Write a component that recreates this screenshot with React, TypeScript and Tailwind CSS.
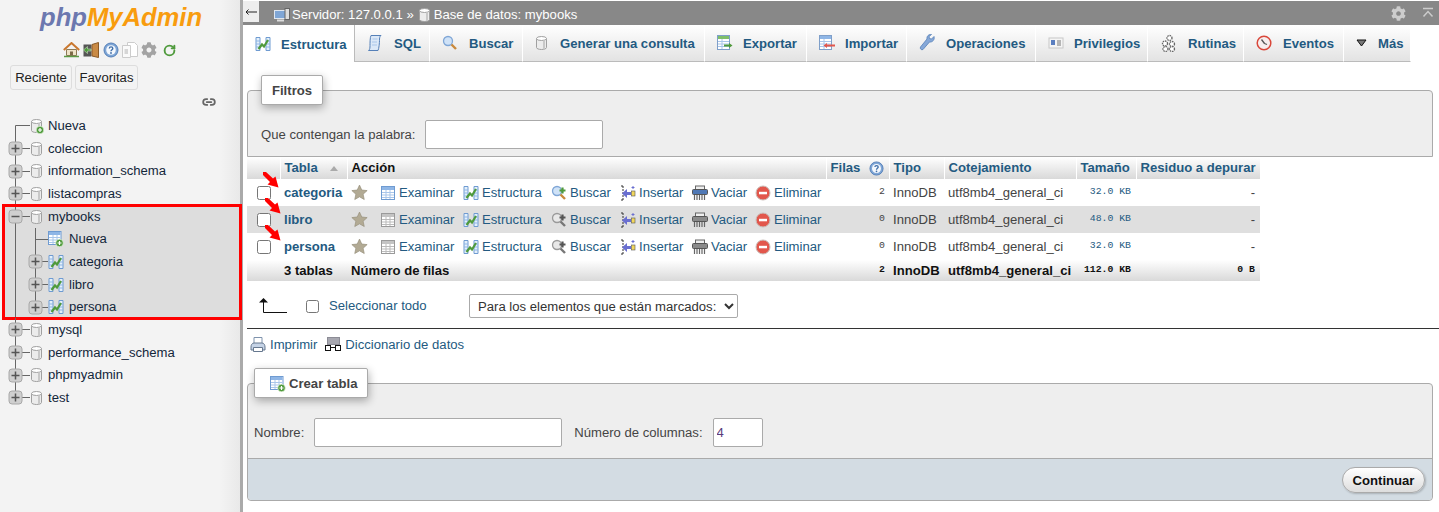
import { FaCog } from 'react-icons/fa'
import { Link2, RotateCw } from 'lucide-react'

const TableIcon = ({ gray = false }: { gray?: boolean }) => {
  const edge = gray ? '#9a9a9a' : '#6f9bd1'
  const head = gray ? '#c4c4c4' : '#8fb6e6'
  return (
    <svg width="16" height="16" viewBox="0 0 16 16" className="shrink-0">
      <rect x="1.5" y="1.5" width="13" height="13" fill="#fff" stroke={edge} />
      <rect x="2" y="2" width="12" height="3" fill={head} />
      <path d="M2 7.5h12M2 10h12M2 12.5h12M6 5v9M10 5v9" stroke={gray ? '#bbb' : '#a9c6ea'} />
    </svg>
  )
}

const PlusBadge = ({ x = 10.5, y = 11.5 }: { x?: number; y?: number }) => (
  <g>
    <circle cx={x} cy={y} r="3.8" fill="#4f9a3c" stroke="#e8f5e0" strokeWidth="0.7" />
    <path d={`M${x - 2} ${y}h4M${x} ${y - 2}v4`} stroke="#fff" strokeWidth="1.2" />
  </g>
)

const NewTableIcon = () => (
  <svg width="16" height="16" viewBox="0 0 16 16" className="shrink-0">
    <rect x="0.5" y="0.5" width="12.5" height="13" fill="#fff" stroke="#6f9bd1" />
    <rect x="1" y="1" width="11.5" height="3" fill="#8fb6e6" />
    <path d="M1 6.5h11M1 9h11M1 11.5h11M5 4v9M9 4v9" stroke="#a9c6ea" />
    <PlusBadge x={11.5} y={12} />
  </svg>
)

const DbIcon = ({ plus = false }: { plus?: boolean }) => (
  <svg width="14" height="16" viewBox="0 0 14 16" className="shrink-0">
    <path d="M1.5 3.5v9c0 1.2 2.4 2 5 2s5-.8 5-2v-9z" fill="#ececec" stroke="#a0a0a0" />
    <ellipse cx="6.5" cy="3.5" rx="5" ry="2" fill="#fff" stroke="#a0a0a0" />
    <path d="M9 5.5v8.5" stroke="#c8c8c8" strokeWidth="2" />
    {plus && <PlusBadge x={10} y={12} />}
  </svg>
)

const StructureIcon = () => (
  <svg width="16" height="16" viewBox="0 0 16 16" className="shrink-0">
    <path d="M1 1.5h4v13H1zM11 1.5h4v13h-4z" fill="#e4f0fb" stroke="#6f9bd1" />
    <path d="M1 5h4M1 8h4M1 11h4M11 5h4M11 8h4M11 11h4" stroke="#8fb6e6" />
    <path d="M3.5 13 7 8.5 9 10.5 13 4" fill="none" stroke="#4f9a3c" strokeWidth="2.2" />
  </svg>
)

const SearchIcon = ({ gray = false, plus = false }: { gray?: boolean; plus?: boolean }) => (
  <svg width="16" height="16" viewBox="0 0 16 16" className="shrink-0">
    <circle cx="6" cy="6" r="4.5" fill={gray ? '#e8e8e8' : '#cfe2f7'} stroke={gray ? '#9a9a9a' : '#7fa6d6'} strokeWidth="1.3" />
    <path d="m9.5 9.5 4.5 4.5" stroke={gray ? '#777' : '#c98a3c'} strokeWidth="2.4" />
    {plus && <path d="M11.5 2.5v6M8.5 5.5h6" stroke={gray ? '#555' : '#4f9a3c'} strokeWidth="2.2" />}
  </svg>
)

const InsertIcon = () => (
  <svg width="16" height="16" viewBox="0 0 16 16" className="shrink-0">
    <path d="M1 1h3M3 1v14M1 15h3" stroke="#333" strokeDasharray="2 1" fill="none" />
    <path d="M11 7H7V4L2 8.5 7 13V10h4z" fill="#6a6fd0" />
    <rect x="11.5" y="6" width="3.5" height="5" fill="#f2d75c" stroke="#555" strokeWidth="0.6" />
    <path d="M13 1v3M11.5 2.5h3" stroke="#6a6fd0" />
  </svg>
)

const EmptyIcon = ({ gray = false }: { gray?: boolean }) => (
  <svg width="16" height="16" viewBox="0 0 16 16" className="shrink-0">
    <rect x="3.5" y="1" width="9" height="4" fill="#eee" stroke="#666" />
    <rect x="0.5" y="4.5" width="15" height="5" rx="1" fill={gray ? '#8a8a8a' : '#4f78b5'} stroke="#555" />
    <path d="M2.5 10v5M5 10v5M7.5 10v5M10 10v5M12.5 10v5" stroke="#666" strokeWidth="1.2" />
  </svg>
)

const DropIcon = () => (
  <svg width="16" height="16" viewBox="0 0 16 16" className="shrink-0">
    <circle cx="8" cy="8" r="7" fill="#e2574c" stroke="#c9c0bc" />
    <rect x="4" y="6.8" width="8" height="2.5" fill="#fff" />
  </svg>
)

const StarIcon = () => (
  <svg width="17" height="17" viewBox="0 0 24 24" className="shrink-0">
    <path d="m12 1.5 3.2 7 7.6.8-5.7 5.1 1.6 7.5L12 18.1 5.3 21.9l1.6-7.5L1.2 9.3l7.6-.8z" fill="#b2aa94" stroke="#98917d" />
  </svg>
)

const HelpIcon = ({ size = 16 }: { size?: number }) => (
  <svg width={size} height={size} viewBox="0 0 16 16" className="shrink-0">
    <circle cx="8" cy="8" r="7" fill="#7fa6d6" stroke="#5580b8" />
    <circle cx="8" cy="8" r="4.8" fill="#f4f8fd" />
    <path d="M6.3 6.5c0-2.2 3.5-2.2 3.5 0 0 1.3-1.8 1.3-1.8 2.7" fill="none" stroke="#3f6ea8" strokeWidth="1.4" />
    <circle cx="8" cy="11" r="0.9" fill="#3f6ea8" />
  </svg>
)

const ScrollIcon = () => (
  <svg width="16" height="18" viewBox="0 0 16 18" className="shrink-0">
    <path d="M4 1.5h10c-1.5 1-1.5 3-1.5 5s-.5 8-1.500 10H1.5c1.500-1 1.500-3 1.500-5S3 3 4 1.5z" fill="#dbe8f7" stroke="#5580b8" />
    <path d="M5.500 5h5M5 8h5M5 11h5" stroke="#a9c6ea" />
  </svg>
)

const ExportIcon = ({ red = false }: { red?: boolean }) => (
  <svg width="16" height="16" viewBox="0 0 16 16" className="shrink-0">
    <rect x="0.5" y="0.5" width="12" height="14" fill="#fff" stroke="#7f9fc9" />
    <rect x="1" y="1" width="11" height="3" fill={red ? '#8fb6e6' : '#7fbf6a'} />
    <path d="M1 6.5h11M1 9h11M1 11.5h11M5 4v10" stroke="#a9c6ea" />
    {red ? (
      <path d="M16 9.5H8V8l-3.5 2.5L8 13v-1.5h8z" fill="#e2574c" />
    ) : (
      <path d="M7 9.5h5V8l3.5 2.5L12 13v-1.5H7z" fill="#4f9a3c" />
    )}
  </svg>
)

const WrenchIcon = () => (
  <svg width="16" height="18" viewBox="0 0 16 18" className="shrink-0">
    <path d="M15 2.5 12.500 5 10.500 4.500 10 2.500 12.500.5C10 0 7.500 2 8 5L1.500 13c-1 1.500 1 3.500 2.500 2.500L10.500 8c3 .5 5.500-2.500 4.500-5.500z" fill="#86a8d8" stroke="#5580b8" strokeWidth="0.8" />
  </svg>
)

const CardIcon = () => (
  <svg width="16" height="16" viewBox="0 0 16 16" className="shrink-0">
    <rect x="1" y="3" width="14" height="10" fill="#f5f5f5" stroke="#c8c8c8" />
    <rect x="3" y="5" width="4" height="5" fill="#5b7fc0" />
    <path d="M9 6h4M9 8h4M9 10h4" stroke="#777" />
  </svg>
)

const RoutinesIcon = () => (
  <svg width="18" height="18" viewBox="0 0 18 18" className="shrink-0" fill="#fff" stroke="#666">
    <circle cx="9.5" cy="4" r="2.5" strokeDasharray="1.5 0.8" strokeWidth="1.3" />
    <circle cx="5" cy="9.5" r="2.5" strokeDasharray="1.5 0.8" strokeWidth="1.3" />
    <circle cx="12" cy="10" r="2.5" strokeDasharray="1.5 0.8" strokeWidth="1.3" />
    <circle cx="5.5" cy="15" r="2.5" strokeDasharray="1.5 0.8" strokeWidth="1.3" />
    <circle cx="12" cy="15" r="2.5" strokeDasharray="1.5 0.8" strokeWidth="1.3" />
  </svg>
)

const EventsIcon = () => (
  <svg width="16" height="16" viewBox="0 0 16 16" className="shrink-0">
    <circle cx="8" cy="8" r="6.8" fill="#f7eeee" stroke="#d9483b" strokeWidth="1.5" />
    <path d="M8.5 8.5 5.5 4.5M8.5 8.5l2.5 1" stroke="#555" strokeWidth="1.3" />
  </svg>
)

const MoreIcon = () => (
  <svg width="11" height="8" viewBox="0 0 11 8" className="shrink-0">
    <path d="M1 1h9L5.5 7z" fill="#777" stroke="#111" />
  </svg>
)

const PrintIcon = () => (
  <svg width="16" height="17" viewBox="0 0 16 17" className="shrink-0">
    <path d="M4 1.5h8v6H4z" fill="#fff" stroke="#7f93ad" />
    <path d="M1 11c0-2 1-4 3-4h8c2 0 3 2 3 4v3H1z" fill="#c5d3e6" stroke="#66788f" />
    <path d="M3.5 11.5h9v4h-9z" fill="#fff" stroke="#66788f" />
  </svg>
)

const DictionaryIcon = () => (
  <svg width="16" height="16" viewBox="0 0 16 16" className="shrink-0">
    <rect x="2" y="1" width="13" height="8" fill="#8c8c96" />
    <path d="M3 3h11M3 5h11M3 7h11" stroke="#c2c2ca" />
    <rect x="0.5" y="9.5" width="5" height="5" fill="#fff" stroke="#111" />
    <rect x="10.5" y="9.5" width="5" height="5" fill="#fff" stroke="#111" />
    <path d="M5 11.5h6" stroke="#111" />
  </svg>
)

const ServerIcon = () => (
  <svg width="16" height="16" viewBox="0 0 16 16" className="shrink-0">
    <rect x="0.5" y="3.5" width="11" height="8" fill="#7fa6d6" stroke="#dfe7f0" />
    <rect x="11" y="1.5" width="4.5" height="11" fill="#ddd" stroke="#666" />
    <path d="M3 13.5h7" stroke="#ddd" strokeWidth="2" />
  </svg>
)

const HomeIcon = () => (
  <svg width="17" height="16" viewBox="0 0 17 16" className="shrink-0">
    <path d="M3.5 7.5h10v6h-10z" fill="#efe3c8" stroke="#8d7a55" />
    <path d="M.8 8 8.5 1l7.700 7" fill="none" stroke="#c9772e" strokeWidth="2" />
    <rect x="7" y="9.5" width="3" height="4" fill="#7d6a48" />
    <path d="M1 14.5h15" stroke="#5c9a45" strokeWidth="1.5" />
  </svg>
)

const ExitIcon = () => (
  <svg width="16" height="16" viewBox="0 0 16 16" className="shrink-0">
    <rect x="0.5" y="2.5" width="8" height="12" fill="#555" />
    <path d="M9 2.5 15.5.5v15L9 14z" fill="#c98a45" stroke="#8a5a28" />
    <path d="M8 7H4.500V4.500L.5 8l4 3.500V9H8z" fill="#4f9a3c" stroke="#dff0d8" strokeWidth="0.5" />
  </svg>
)

const DocsIcon = () => (
  <svg width="16" height="16" viewBox="0 0 16 16" className="shrink-0">
    <path d="M5.5.5h7l3 3v11h-10z" fill="#fff" stroke="#ccc" />
    <path d="M.5 3.5h8v12h-8z" fill="#fafafa" stroke="#ccc" />
    <rect x="2.5" y="7" width="3.5" height="5" fill="#d6d6d6" />
  </svg>
)

type TreeProps = {
  name: string
  expander?: 'plus' | 'minus'
  first?: boolean
  last?: boolean
  nested?: boolean
  nestedLast?: boolean
  icon: React.ReactNode
}

const Expander = ({ x, minus = false }: { x: number; minus?: boolean }) => (
  <g>
    <rect x={x - 6.5} y="5" width="13" height="13" rx="3" fill="#cfcfcf" stroke="#a8a8a8" />
    <path d={minus ? `M${x - 4} 11.5h8` : `M${x - 4} 11.5h8M${x} 7.5v8`} stroke="#555" strokeWidth="1.5" />
  </g>
)

const TreeRow = ({ name, expander, first, last, nested, nestedLast, icon }: TreeProps) => {
  // the connector lines run through a fixed gutter at the left of each row
  const width = nested ? 48 : 30
  return (
    <div className="relative flex h-[22.67px] items-center">
      <svg width={width} height="23" viewBox={`0 0 ${width} 23`} className="shrink-0 overflow-visible">
        <path d={`M15.5 ${first ? 11.5 : 0}V${last ? 11.5 : 23.5}`} stroke="#666" fill="none" />
        {!nested && <path d="M15.5 11.5H30" stroke="#666" />}
        {nested && <path d={`M35.5 0V${nestedLast ? 11.5 : 23.5}M35.5 11.5H48`} stroke="#666" fill="none" />}
        {expander && <Expander x={nested ? 35.5 : 15.5} minus={expander === 'minus'} />}
      </svg>
      {icon}
      <span className={nested ? 'ml-[5px] text-[#12263a]' : 'ml-[4px] text-[#12263a]'}>{name}</span>
    </div>
  )
}

const Sidebar = () => (
  <aside className="relative z-10 flex h-full w-[240px] shrink-0 flex-col bg-[linear-gradient(to_right,#f3f3f3_92%,#e9e9e9)]">
    <div className="mt-[1px] h-[33px] pl-[40px] text-[25.6px] leading-[33px] font-bold italic">
      <span className="text-[#6c78af]">php</span>
      <span className="text-[#f89c0e]">MyAdmin</span>
    </div>
    <div className="mt-[7px] flex h-[18px] items-center pl-[63px]">
      <HomeIcon />
      <span className="w-[3px]" />
      <ExitIcon />
      <span className="w-[4px]" />
      <HelpIcon />
      <span className="w-[3px]" />
      <DocsIcon />
      <span className="w-[3px]" />
      <FaCog className="h-[16px] w-[16px] text-[#a3a3a3]" />
      <span className="w-[6px]" />
      <RotateCw size={13} strokeWidth={3.5} className="text-[#4f9a3c]" />
    </div>
    <div className="mt-[6px] flex gap-[3px] pl-[10px]">
      <button className="h-[25px] w-[62px] rounded-[3px] border border-[#ddd] text-[#222]">Reciente</button>
      <button className="h-[25px] w-[63px] rounded-[3px] border border-[#ddd] text-[#222]">Favoritas</button>
    </div>
    <div className="mt-[5px] flex h-[14px] justify-end pr-[24px]">
      <Link2 size={14} strokeWidth={3} className="text-[#666]" />
    </div>
    <div className="mt-[5.67px]">
      <TreeRow name="Nueva" first icon={<DbIcon plus />} />
      <TreeRow name="coleccion" expander="plus" icon={<DbIcon />} />
      <TreeRow name="information_schema" expander="plus" icon={<DbIcon />} />
      <TreeRow name="listacompras" expander="plus" icon={<DbIcon />} />
      <div className="relative">
        <div className="absolute -top-px -right-[2px] -bottom-[1.5px] left-[2px] bg-[#ddd]" />
        <TreeRow name="mybooks" expander="minus" icon={<DbIcon />} />
        <TreeRow name="Nueva" nested icon={<NewTableIcon />} />
        <TreeRow name="categoria" nested expander="plus" icon={<StructureIcon />} />
        <TreeRow name="libro" nested expander="plus" icon={<StructureIcon />} />
        <TreeRow name="persona" nested nestedLast expander="plus" icon={<StructureIcon />} />
        <div className="absolute -top-px -right-[2px] -bottom-[1.5px] left-[2px] border-[3px] border-[#f00]" />
      </div>
      <TreeRow name="mysql" expander="plus" icon={<DbIcon />} />
      <TreeRow name="performance_schema" expander="plus" icon={<DbIcon />} />
      <TreeRow name="phpmyadmin" expander="plus" icon={<DbIcon />} />
      <TreeRow name="test" expander="plus" last icon={<DbIcon />} />
    </div>
  </aside>
)

const tabs = [
  { label: 'Estructura', width: 'w-[112px]', gap: 'gap-[10px]', icon: <StructureIcon />, active: true },
  { label: 'SQL', width: 'w-[75px]', gap: 'gap-[11px]', icon: <ScrollIcon /> },
  { label: 'Buscar', width: 'w-[93px]', gap: 'gap-[11px]', icon: <SearchIcon /> },
  { label: 'Generar una consulta', width: 'w-[182px]', gap: 'gap-[11px]', icon: <DbIcon /> },
  { label: 'Exportar', width: 'w-[102px]', gap: 'gap-[10px]', icon: <ExportIcon /> },
  { label: 'Importar', width: 'w-[100px]', gap: 'gap-[10px]', icon: <ExportIcon red /> },
  { label: 'Operaciones', width: 'w-[129px]', gap: 'gap-[11px]', icon: <WrenchIcon /> },
  { label: 'Privilegios', width: 'w-[112px]', gap: 'gap-[10px]', icon: <CardIcon /> },
  { label: 'Rutinas', width: 'w-[96px]', gap: 'gap-[10px]', icon: <RoutinesIcon /> },
  { label: 'Eventos', width: 'w-[100px]', gap: 'gap-[11px]', icon: <EventsIcon /> },
  { label: 'Más', width: 'w-[67px]', gap: 'gap-[11px]', icon: <MoreIcon /> },
]

const tableRows = [
  { name: 'categoria', rows: '2', size: '32.0', alt: false, empty: false },
  { name: 'libro', rows: '0', size: '48.0', alt: true, empty: true },
  { name: 'persona', rows: '0', size: '32.0', alt: false, empty: true },
]

const Action = ({ width, icon, label }: { width: string; icon: React.ReactNode; label: string }) => (
  <span className={`flex items-center gap-[3px] ${width}`}>
    {icon}
    <span className="text-[#235a81]">{label}</span>
  </span>
)

const HeaderCell = ({ children, width }: { children?: React.ReactNode; width: string }) => (
  <th className={`border-l border-white pl-[4px] text-left font-bold text-[#235a81] ${width}`}>{children}</th>
)

const Arrow = ({ className }: { className: string }) => (
  <svg width="16" height="16" viewBox="0 0 16 16" className={`absolute ${className}`}>
    <path d="M0 0 3 0 10 6.500 12.500 4.500 15.500 15.500 4.500 12.500 7 10 0 3z" fill="#f00" />
  </svg>
)

const TablesList = () => (
  <div className="relative w-[1013px]">
    <table className="w-full table-fixed border-collapse">
      <thead>
        <tr className="h-[22px] bg-linear-to-b from-white to-[#d9d9d9]">
          <th className="w-[33px]" />
          <HeaderCell width="w-[67px]">
            <span className="flex items-center">
              Tabla
              <svg width="8" height="5" viewBox="0 0 8 5" className="ml-[12px]">
                <path d="M4 0 8 5H0z" fill="#aaa" />
              </svg>
            </span>
          </HeaderCell>
          <th className="w-[479px] border-l border-white pl-[4px] text-left font-bold text-[#111]">Acción</th>
          <HeaderCell width="w-[63px]">
            <span className="flex items-center gap-[9px]">
              Filas
              <HelpIcon size={15} />
            </span>
          </HeaderCell>
          <HeaderCell width="w-[55px]">Tipo</HeaderCell>
          <HeaderCell width="w-[132px]">Cotejamiento</HeaderCell>
          <HeaderCell width="w-[60px]">Tamaño</HeaderCell>
          <HeaderCell width="w-[124px]">Residuo a depurar</HeaderCell>
        </tr>
      </thead>
      <tbody>
        {tableRows.map((row) => (
          <tr key={row.name} className={row.alt ? 'h-[27px] bg-[#dfdfdf]' : 'h-[27px] bg-white'}>
            <td className="pl-[10px]">
              <input type="checkbox" className="block h-[14px] w-[14px]" />
            </td>
            <td className="pl-[4px] font-bold text-[#235a81]">{row.name}</td>
            <td className="pl-[4px]">
              <div className="flex items-center">
                <span className="mr-[12px]">
                  <StarIcon />
                </span>
                <Action width="w-[83px]" icon={<TableIcon gray={row.empty} />} label="Examinar" />
                <Action width="w-[88px]" icon={<StructureIcon />} label="Estructura" />
                <Action width="w-[69px]" icon={<SearchIcon plus gray={row.empty} />} label="Buscar" />
                <Action width="w-[72px]" icon={<InsertIcon />} label="Insertar" />
                <Action width="w-[63px]" icon={<EmptyIcon gray={row.empty} />} label="Vaciar" />
                <Action width="w-[70px]" icon={<DropIcon />} label="Eliminar" />
              </div>
            </td>
            <td className="pr-[4px] text-right font-['Liberation_Mono',monospace] text-[9.8px] text-[#444]">{row.rows}</td>
            <td className="pl-[4px] text-[#444]">InnoDB</td>
            <td className="pl-[4px] text-[#444]">utf8mb4_general_ci</td>
            <td className="pr-[5px] text-right font-['Liberation_Mono',monospace] text-[9.8px] text-[#235a81]">{row.size} KB</td>
            <td className="pr-[5px] text-right text-[#444]">-</td>
          </tr>
        ))}
      </tbody>
      <tfoot>
        <tr className="h-[21px] bg-linear-to-b from-white to-[#d9d9d9] font-bold text-[#111]">
          <td />
          <td className="pl-[4px]">3 tablas</td>
          <td className="pl-[4px]">Número de filas</td>
          <td className="pr-[4px] text-right font-['Liberation_Mono',monospace] text-[9.8px]">2</td>
          <td className="pl-[4px]">InnoDB</td>
          <td className="pl-[4px] whitespace-nowrap">utf8mb4_general_ci</td>
          <td className="pr-[5px] text-right font-['Liberation_Mono',monospace] text-[9.8px]">112.0 KB</td>
          <td className="pr-[5px] text-right font-['Liberation_Mono',monospace] text-[9.8px]">0 B</td>
        </tr>
      </tfoot>
    </table>
    <Arrow className="top-[15px] left-[16px]" />
    <Arrow className="top-[41px] left-[18px]" />
    <Arrow className="top-[68px] left-[18px]" />
  </div>
)

const Legend = ({ className, children }: { className: string; children: React.ReactNode }) => (
  <div className={`relative z-10 flex h-[30px] items-center rounded-[2px] border border-[#aaa] bg-white pt-[2px] font-bold text-[#444] shadow-[1px_3px_8px_rgba(0,0,0,0.3)] ${className}`}>
    {children}
  </div>
)

const App = () => {
  return (
    <div className="flex h-[512px] w-[1439px] overflow-hidden bg-white font-['Liberation_Sans',Arial,sans-serif] text-[13.12px] text-[#444]">
      <Sidebar />
      <div className="h-full w-[3px] shrink-0 bg-[#aaa]" />
      <main className="min-w-0 flex-1">
        <div className="mt-px flex h-[24px] items-center bg-[#888] text-white">
          <span className="flex h-[21px] w-[16px] items-center justify-center self-start bg-[#eee] text-[#222]">
            <svg width="12" height="6" viewBox="0 0 12 6">
              <path d="M12 3H1M3.5.5 1 3l2.5 2.5" fill="none" stroke="#222" />
            </svg>
          </span>
          <span className="ml-[15px] flex items-center gap-[2px] pt-[3px]">
            <ServerIcon />
            Servidor: 127.0.0.1 »
          </span>
          <span className="ml-[4px] flex items-center gap-[2px] pt-[3px]">
            <DbIcon />
            Base de datos: mybooks
          </span>
          <FaCog className="mr-[16px] ml-auto h-[15px] w-[15px] text-[#ccc]" />
          <svg width="12" height="12" viewBox="0 0 12 12" className="mr-[5px]">
            <path d="M1 1.5h10M1.5 9.5 6 4.5l4.500 5" fill="none" stroke="#ccc" strokeWidth="1.5" />
          </svg>
        </div>
        <nav className="flex h-[37px] items-stretch">
          {tabs.map((tab) => (
            <div
              key={tab.label}
              className={`flex items-center pl-[12px] font-bold text-[#235a81] ${tab.gap} ${tab.width} ${
                tab.active
                  ? 'border-r border-[#bbb] bg-white'
                  : 'border-r border-b border-r-white border-b-[#bbb] bg-linear-to-b from-white to-[#e3e3e3]'
              }`}
            >
              {tab.icon}
              <span className="pt-[2px] whitespace-nowrap">{tab.label}</span>
            </div>
          ))}
        </nav>

        <div className="pl-[4px]">
          <Legend className="mt-[13px] ml-[14px] w-[62px] justify-center">Filtros</Legend>
          <div className="-mt-[15px] mr-[6px] flex h-[67px] items-start rounded-t-[4px] border border-[#aaa] bg-[#eee] pt-[29px] pl-[13px]">
            <label className="flex items-center gap-[9px]">
              Que contengan la palabra:
              <input className="h-[29px] w-[178px] rounded-[2px] border border-[#aaa] bg-white" />
            </label>
          </div>

          <TablesList />

          <div className="mt-[13px] flex h-[24px] items-center">
            <svg width="28" height="16" viewBox="0 0 28 16" className="ml-[12px]">
              <path d="M4.5 3V14.5H28" fill="none" stroke="#111" />
              <path d="M4.5 0 9 4.5H0z" fill="#111" />
            </svg>
            <input type="checkbox" className="ml-[19px] h-[13px] w-[13px]" />
            <span className="ml-[10px] w-[140px] text-[#235a81]">Seleccionar todo</span>
            <select className="h-[24px] w-[269px] rounded-[2px] border border-[#aaa] bg-white pl-[4px] text-[#333]">
              <option>Para los elementos que están marcados:</option>
            </select>
          </div>
          <hr className="mt-[10px] border-t border-[#333]" />
          <div className="mt-[6px] flex h-[18px] items-center pl-[3px] text-[#235a81]">
            <PrintIcon />
            <span className="ml-[4px] pt-[2px]">Imprimir</span>
            <span className="ml-[8px]">
              <DictionaryIcon />
            </span>
            <span className="ml-[4px] pt-[2px]">Diccionario de datos</span>
          </div>

          <Legend className="mt-[15px] ml-[7px] w-[114px] gap-[3px] pl-[15px]">
            <NewTableIcon />
            Crear tabla
          </Legend>
          <div className="-mt-[15px] mr-[6px] rounded-[4px] border border-[#aaa] bg-[#eee]">
            <div className="h-[75px] border-b border-[#aaa] pt-[34px] pl-[6px]">
              <div className="flex h-[29px] items-center gap-[10px]">
                <span>Nombre:</span>
                <input className="h-[29px] w-[248px] rounded-[2px] border border-[#aaa] bg-white" />
                <span className="ml-[2px]">Número de columnas:</span>
                <input defaultValue="4" className="h-[29px] w-[50px] rounded-[2px] border border-[#aaa] bg-white pl-[3px] text-[#5a3b7a]" />
              </div>
            </div>
            <div className="flex h-[41px] items-center justify-end rounded-b-[4px] bg-[#d3dce3] pr-[7px]">
              <button className="h-[26px] w-[83px] rounded-[13px] border border-[#aaa] bg-linear-to-b from-white to-[#ddd] pt-[2px] font-bold text-[#111] shadow-[1px_1px_2px_rgba(0,0,0,0.2)]">
                Continuar
              </button>
            </div>
          </div>
        </div>
      </main>
    </div>
  )
}

export default App
